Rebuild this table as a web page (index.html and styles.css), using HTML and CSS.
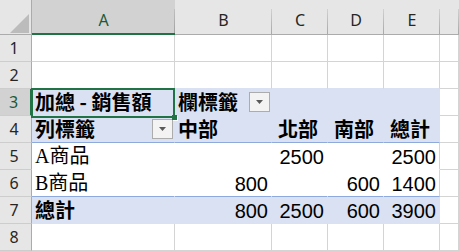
FILE: index.html
```html
<!DOCTYPE html>
<html lang="zh-Hant">
<head>
<meta charset="utf-8">
<title>樞紐分析表</title>
<link rel="stylesheet" href="styles.css">
</head>
<body>
<div class="sheet">
  <!-- column headings -->
  <div class="corner"><svg class="corner-tri" width="19" height="19" viewBox="0 0 19 19"><polygon points="0,19 19,19 19,0"/></svg></div>
  <div class="colhead sel">A</div>
  <div class="colhead">B</div>
  <div class="colhead">C</div>
  <div class="colhead">D</div>
  <div class="colhead">E</div>
  <div class="colhead"></div>

  <!-- row 1 -->
  <div class="rowhead">1</div>
  <div class="cell"></div><div class="cell"></div><div class="cell"></div><div class="cell"></div><div class="cell"></div><div class="cell"></div>

  <!-- row 2 -->
  <div class="rowhead">2</div>
  <div class="cell above"></div><div class="cell above"></div><div class="cell above"></div><div class="cell above"></div><div class="cell above"></div><div class="cell"></div>

  <!-- row 3: value field / column labels -->
  <div class="rowhead sel">3</div>
  <div class="cell pv band b">加總 - 銷售額</div>
  <div class="cell pv band b">欄標籤<span class="filter"><svg width="7" height="4" viewBox="0 0 7 4"><polygon points="0,0 7,0 3.5,4"/></svg></span></div>
  <div class="cell pv band"></div>
  <div class="cell pv band"></div>
  <div class="cell pv band last"></div>
  <div class="cell"></div>

  <!-- row 4: row labels + regions -->
  <div class="rowhead">4</div>
  <div class="cell pv band rule b">列標籤<span class="filter"><svg width="7" height="4" viewBox="0 0 7 4"><polygon points="0,0 7,0 3.5,4"/></svg></span></div>
  <div class="cell pv band rule b">中部</div>
  <div class="cell pv band rule b num">北部</div>
  <div class="cell pv band rule b num">南部</div>
  <div class="cell pv band rule b num last">總計</div>
  <div class="cell"></div>

  <!-- row 5 -->
  <div class="rowhead">5</div>
  <div class="cell pv lbl">A商品</div>
  <div class="cell pv num"></div>
  <div class="cell pv num digits">2500</div>
  <div class="cell pv num"></div>
  <div class="cell pv num digits edge">2500</div>
  <div class="cell"></div>

  <!-- row 6 -->
  <div class="rowhead">6</div>
  <div class="cell pv rule lbl">B商品</div>
  <div class="cell pv rule num digits">800</div>
  <div class="cell pv rule num"></div>
  <div class="cell pv rule num digits">600</div>
  <div class="cell pv rule num digits edge">1400</div>
  <div class="cell"></div>

  <!-- row 7: grand total -->
  <div class="rowhead">7</div>
  <div class="cell pv band b">總計</div>
  <div class="cell pv band num digits">800</div>
  <div class="cell pv band num digits">2500</div>
  <div class="cell pv band num digits">600</div>
  <div class="cell pv band num digits last">3900</div>
  <div class="cell"></div>

  <!-- row 8 -->
  <div class="rowhead">8</div>
  <div class="cell"></div><div class="cell"></div><div class="cell"></div><div class="cell"></div><div class="cell"></div><div class="cell"></div>

  <!-- active cell A3 -->
  <div class="selection"><span class="handle"></span></div>
</div>
</body>
</html>
```

FILE: styles.css
```css
html, body {
  margin: 0;
  padding: 0;
  background: #ffffff;
}

.sheet {
  position: relative;
  display: grid;
  grid-template-columns: 32px 143px 97px 56px 56px 56px 1fr;
  grid-template-rows: 35px repeat(8, 27px);
  width: 459px;
  height: 251px;
  overflow: hidden;
  font-family: "Noto Sans CJK TC", "Noto Sans", sans-serif;
  color: #000000;
}

.sheet > div {
  box-sizing: border-box;
  min-width: 0;
}

/* headings */
.corner {
  background: #e6e6e6;
  border-right: 1px solid #ababab;
  border-bottom: 1px solid #ababab;
  display: flex;
  justify-content: flex-end;
  align-items: flex-end;
  padding: 0 2px 1px 0;
}

.corner-tri {
  display: block;
  fill: #bcbcbc;
}

.colhead {
  background:
    linear-gradient(to bottom, #e6e6e6 0, #e6e6e6 9px, #d0d0d0 9px, #a8a8a8 100%) right top / 1px 100% no-repeat,
    #e6e6e6;
  border-bottom: 1px solid #ababab;
  display: flex;
  justify-content: center;
  align-items: center;
  padding-top: 6px;
  font-family: "Noto Sans", "Open Sans", sans-serif;
  font-size: 16px;
  line-height: 20px;
  color: #262626;
}

.colhead.sel {
  background:
    linear-gradient(to bottom, #d2d2d2 0, #d2d2d2 9px, #c0c0c0 9px, #a0a0a0 100%) right top / 1px 100% no-repeat,
    #d2d2d2;
  border-bottom: 2px solid #217346;
  color: #1d5a38;
}

.rowhead {
  background: #e6e6e6;
  border-right: 1px solid #ababab;
  border-bottom: 1px solid #cdcdcd;
  display: flex;
  justify-content: center;
  align-items: center;
  padding-right: 3px;
  font-family: "Noto Sans", "Open Sans", sans-serif;
  font-size: 16px;
  line-height: 20px;
  color: #262626;
}

.rowhead.sel {
  background: #d2d2d2;
  border-right: 2px solid #217346;
  color: #1d5a38;
}

/* worksheet cells */
.cell {
  background: #ffffff;
  border-right: 1px solid #d4d4d4;
  border-bottom: 1px solid #d4d4d4;
  display: flex;
  align-items: center;
  padding: 0 3px 0 3px;
  font-size: 20px;
  line-height: 22px;
  white-space: nowrap;
}

.cell.above {
  border-bottom-color: #d9e1f2;
}

/* pivot table body: fill hides the grid */
.cell.pv {
  border-right-color: transparent;
  border-bottom-color: transparent;
}

.cell.pv.edge {
  border-right-color: #d4d4d4;
}

.cell.band {
  background: #d9e1f2;
}

.cell.pv.rule {
  border-bottom-color: #8ea9db;
}

.cell.b {
  font-weight: 700;
}

.cell.b.num {
  padding-right: 9px;
}

.cell.lbl {
  font-family: "Liberation Serif", "Noto Sans CJK TC", serif;
}

.cell.num {
  justify-content: flex-end;
}

.cell.digits {
  font-family: "Liberation Sans Narrow", "Liberation Sans", sans-serif;
  font-stretch: condensed;
  padding-top: 1px;
}

/* autofilter dropdown */
.filter {
  margin-left: auto;
  margin-right: -2px;
  width: 21px;
  height: 20px;
  box-sizing: border-box;
  border: 1px solid #acacac;
  background: #f3f3f3;
  display: flex;
  align-items: center;
  justify-content: center;
  flex: none;
}

.filter svg {
  display: block;
  fill: #595959;
}

/* active cell outline */
.selection {
  position: absolute;
  left: 31px;
  top: 88px;
  width: 144px;
  height: 30px;
  box-sizing: border-box;
  border: 2px solid #217346;
  pointer-events: none;
}

.handle {
  position: absolute;
  right: -4px;
  bottom: -4px;
  width: 5px;
  height: 5px;
  background: #217346;
  box-shadow: 1px 1px 0 0 #ffffff;
}
```
